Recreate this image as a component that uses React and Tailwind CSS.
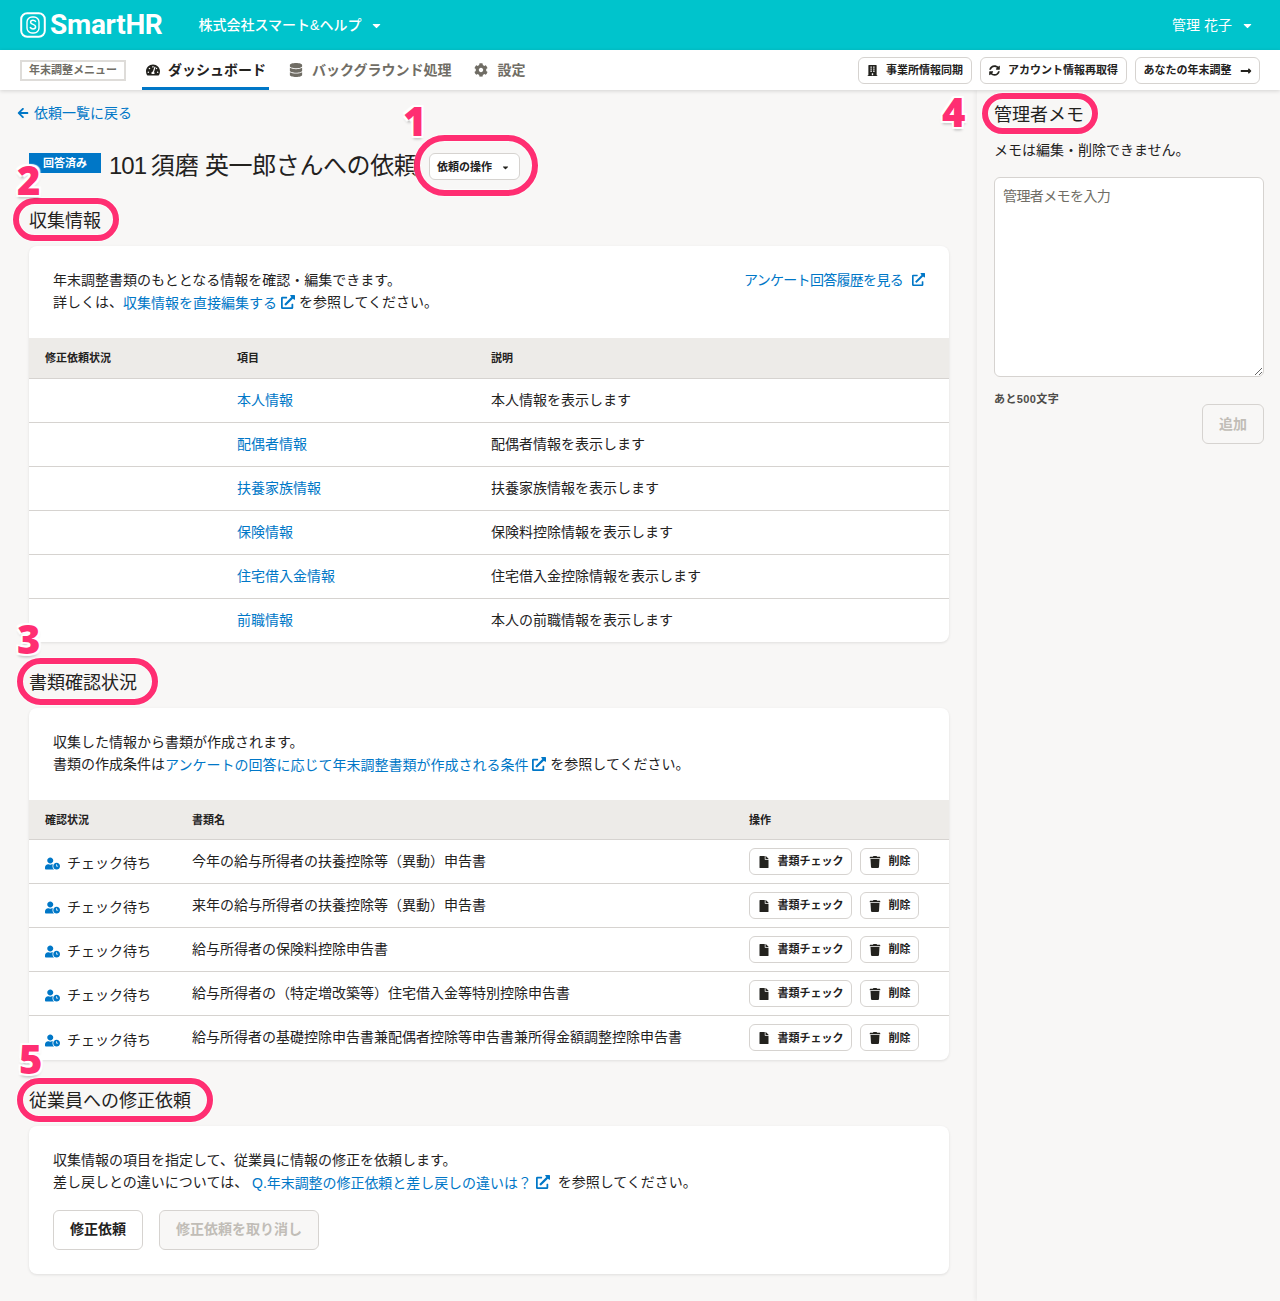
import {
  FaArrowLeft,
  FaBuilding,
  FaCaretDown,
  FaCog,
  FaDatabase,
  FaExternalLinkAlt,
  FaFile,
  FaLongArrowAltRight,
  FaSyncAlt,
  FaTachometerAlt,
  FaTrash,
  FaUserClock,
} from 'react-icons/fa';

const infoRows = [
  ['本人情報', '本人情報を表示します'],
  ['配偶者情報', '配偶者情報を表示します'],
  ['扶養家族情報', '扶養家族情報を表示します'],
  ['保険情報', '保険料控除情報を表示します'],
  ['住宅借入金情報', '住宅借入金控除情報を表示します'],
  ['前職情報', '本人の前職情報を表示します'],
];

const docRows = [
  '今年の給与所得者の扶養控除等（異動）申告書',
  '来年の給与所得者の扶養控除等（異動）申告書',
  '給与所得者の保険料控除申告書',
  '給与所得者の（特定増改築等）住宅借入金等特別控除申告書',
  '給与所得者の基礎控除申告書兼配偶者控除等申告書兼所得金額調整控除申告書',
];

const rings = [
  { key: 1, className: 'left-[414px] top-[135px] w-[124px] h-[61px]' },
  { key: 2, className: 'left-[13px] top-[198px] w-[106px] h-[43px]' },
  { key: 3, className: 'left-[17px] top-[658px] w-[141px] h-[47px]' },
  { key: 4, className: 'left-[982px] top-[93px] w-[116px] h-[41px]' },
  { key: 5, className: 'left-[17px] top-[1078px] w-[196px] h-[44px]' },
];

const numbers = [
  { n: '1', className: 'left-[403px] top-[98px]' },
  { n: '2', className: 'left-[17px] top-[157px]' },
  { n: '3', className: 'left-[17px] top-[616px]' },
  { n: '4', className: 'left-[942px] top-[89px]' },
  { n: '5', className: 'left-[19px] top-[1036px]' },
];

const ToolButton = ({ children, className = '' }) => (
  <button className={`flex h-[27px] items-center justify-center rounded-[6px] border border-[#d6d3d0] bg-white text-[11px] font-bold text-[#23221e] ${className}`}>
    {children}
  </button>
);

const ExternalLink = ({ children }) => (
  <a className="text-[#0077c7] align-[-1px]">
    {children}
    <FaExternalLinkAlt className="ml-[4px] inline-block align-[-1px] text-[14px]" />
  </a>
);

const Card = ({ children }) => (
  <section className="overflow-hidden rounded-[8px] bg-white shadow-[0_1px_3px_rgba(0,0,0,0.1)]">{children}</section>
);

const SectionTitle = ({ children }) => (
  <h2 className="h-[26px] text-[18px] leading-[28px] text-[#23221e]">{children}</h2>
);

const App = () => {
  return (
    <div
      className="relative h-[1301px] w-[1280px] overflow-hidden bg-[#f8f7f6] text-[14px] text-[#23221e]"
      style={{ fontFamily: '"Liberation Sans", "Noto Sans CJK JP", sans-serif' }}
    >
      <header className="flex h-[50px] items-center justify-between bg-[#00c4cc] pl-[20px] pr-[26px] text-white">
        <div className="flex items-center">
          <svg width="26" height="26" viewBox="0 0 26 26" fill="none">
            <rect x="1.2" y="1.2" width="23.6" height="23.6" rx="6" stroke="white" strokeWidth="2" />
            <rect x="7" y="5" width="12" height="16" rx="5" stroke="white" strokeWidth="1.4" />
            <path d="M15.5 9.4c-.6-.9-1.5-1.2-2.5-1.2-1.4 0-2.4.8-2.4 2 0 2.8 5 1.6 5 4.6 0 1.3-1.1 2.1-2.6 2.1-1.1 0-2.1-.5-2.7-1.4" stroke="white" strokeWidth="1.5" strokeLinecap="round" />
          </svg>
          <span className="ml-[4px] text-[28px] font-bold leading-none tracking-[-0.3px]" style={{ fontFamily: 'Roboto, sans-serif' }}>SmartHR</span>
          <span className="ml-[36px] font-medium">株式会社スマート&amp;ヘルプ</span>
          <FaCaretDown className="ml-[9px] text-[13px]" />
        </div>
        <div className="flex items-center">
          <span>管理 花子</span>
          <FaCaretDown className="ml-[9px] text-[13px]" />
        </div>
      </header>

      <nav className="relative z-10 flex h-[40px] items-center justify-between bg-white pl-[20px] pr-[20px] shadow-[0_1px_4px_rgba(0,0,0,0.15)]">
        <div className="flex h-full items-center">
          <span className="flex h-[21px] w-[106px] items-center justify-center border-2 border-[#dedcd9] pt-[1px] text-[11px] font-bold text-[#706d65]">年末調整メニュー</span>
          <a className="ml-[16px] flex h-full items-center border-b-[3px] border-[#0077c7] pl-[4px] pr-[3px] pt-[3px] font-bold">
            <FaTachometerAlt className="text-[14px]" />
            <span className="ml-[8px]">ダッシュボード</span>
          </a>
          <a className="ml-[20px] flex items-center font-bold text-[#706d65]">
            <FaDatabase className="text-[14px]" />
            <span className="ml-[9px]">バックグラウンド処理</span>
          </a>
          <a className="ml-[23px] flex items-center font-bold text-[#706d65]">
            <FaCog className="text-[14px]" />
            <span className="ml-[9px]">設定</span>
          </a>
        </div>
        <div className="flex items-center gap-[8px]">
          <ToolButton className="w-[114px] pt-[1px]">
            <FaBuilding className="mr-[8px] text-[11px]" />事業所情報同期
          </ToolButton>
          <ToolButton className="w-[147px] pt-[1px]">
            <FaSyncAlt className="mr-[8px] text-[11px]" />アカウント情報再取得
          </ToolButton>
          <ToolButton className="w-[125px] pt-[1px]">
            あなたの年末調整<FaLongArrowAltRight className="ml-[8px] text-[12px]" />
          </ToolButton>
        </div>
      </nav>

      <div className="flex h-[1211px]">
        <main className="w-[977px] pl-[29px] pr-[28px]">
          <a className="ml-[-12px] mt-[13px] flex h-[20px] items-center text-[#0077c7]">
            <FaArrowLeft className="mr-[5px] text-[12px]" />依頼一覧に戻る
          </a>
          <div className="mt-[30px] flex h-[27px] items-center">
            <span className="h-[20px] w-[72px] self-start bg-[#0077c7] pl-[14px] text-[11px] font-bold leading-[20px] text-white">回答済み</span>
            <h1 className="ml-[8px] w-[312px] whitespace-nowrap pb-[2px] text-[24px] leading-[25px]">
              <span className="tracking-[-1px]">101 </span>
              <span className="ml-[-1px]">須磨</span>
              <span className="tracking-[-0.4px]"> 英一郎さんへの依頼</span>
            </h1>
            <ToolButton className="ml-[8px] w-[91px] pr-[2px] pt-[2px]">
              依頼の操作<FaCaretDown className="ml-[9px] text-[9px]" />
            </ToolButton>
          </div>

          <div className="mt-[27px]">
            <SectionTitle>収集情報</SectionTitle>
          </div>
          <div className="mt-[13px]">
            <Card>
              <div className="flex h-[92px] justify-between px-[24px] pt-[23px] leading-[22px]">
                <p>
                  年末調整書類のもととなる情報を確認・編集できます。
                  <br />
                  詳しくは、<ExternalLink>収集情報を直接編集する</ExternalLink> を参照してください。
                </p>
                <div className="text-[#0077c7]">
                  <span className="tracking-[-0.7px]">アンケート回答履歴を見る</span>
                  <FaExternalLinkAlt className="ml-[9px] inline-block align-[-1px] text-[13px]" />
                </div>
              </div>
              <table className="w-full table-fixed border-collapse">
                <colgroup>
                  <col className="w-[192px]" />
                  <col className="w-[254px]" />
                  <col />
                </colgroup>
                <thead>
                  <tr className="h-[40px] bg-[#edebe8] text-left text-[11px]">
                    <th className="pl-[16px] font-bold">修正依頼状況</th>
                    <th className="pl-[16px] font-bold">項目</th>
                    <th className="pl-[16px] font-bold">説明</th>
                  </tr>
                </thead>
                <tbody>
                  {infoRows.map(([name, desc]) => (
                    <tr key={name} className="h-[44px] border-t border-[#d6d3d0]">
                      <td />
                      <td className="pl-[16px] pt-[1px] text-[#0077c7]">{name}</td>
                      <td className="pl-[16px] pt-[1px]">{desc}</td>
                    </tr>
                  ))}
                </tbody>
              </table>
            </Card>
          </div>

          <div className="mt-[27px]">
            <SectionTitle>書類確認状況</SectionTitle>
          </div>
          <div className="mt-[13px]">
            <Card>
              <div className="h-[92px] px-[24px] pt-[23px] leading-[22px]">
                <p>
                  収集した情報から書類が作成されます。
                  <br />
                  書類の作成条件は<ExternalLink>アンケートの回答に応じて年末調整書類が作成される条件</ExternalLink> を参照してください。
                </p>
              </div>
              <table className="w-full table-fixed border-collapse">
                <colgroup>
                  <col className="w-[147px]" />
                  <col className="w-[557px]" />
                  <col />
                </colgroup>
                <thead>
                  <tr className="h-[39px] bg-[#edebe8] text-left text-[11px]">
                    <th className="pl-[16px] pt-[1px] font-bold">確認状況</th>
                    <th className="pl-[16px] pt-[1px] font-bold">書類名</th>
                    <th className="pl-[16px] pt-[1px] font-bold">操作</th>
                  </tr>
                </thead>
                <tbody>
                  {docRows.map((doc, index) => (
                    <tr key={doc} className={`border-t border-[#d6d3d0] ${index === 4 ? 'h-[45px]' : 'h-[44px]'}`}>
                      <td className="pl-[16px]">
                        <span className="flex items-center pt-[5px]">
                          <FaUserClock className="text-[15px] text-[#0077c7]" />
                          <span className="ml-[7px]">チェック待ち</span>
                        </span>
                      </td>
                      <td className="pl-[16px]">{doc}</td>
                      <td className="pl-[16px]">
                        <div className="flex gap-[8px]">
                          <ToolButton className="w-[103px] pt-[1px]">
                            <FaFile className="mr-[8px] text-[12px]" />書類チェック
                          </ToolButton>
                          <ToolButton className="w-[59px] pt-[1px]">
                            <FaTrash className="mr-[8px] text-[12px]" />削除
                          </ToolButton>
                        </div>
                      </td>
                    </tr>
                  ))}
                </tbody>
              </table>
            </Card>
          </div>

          <div className="mt-[27px]">
            <SectionTitle>従業員への修正依頼</SectionTitle>
          </div>
          <div className="mt-[13px]">
            <Card>
              <div className="h-[148px] px-[24px] pt-[23px] leading-[22px]">
                <p>
                  収集情報の項目を指定して、従業員に情報の修正を依頼します。
                  <br />
                  差し戻しとの違いについては、 <ExternalLink><span className="tracking-[-0.05px]">Q.年末調整の修正依頼と差し戻しの違いは？</span></ExternalLink> <span className="ml-[4px]">を参照してください。</span>
                </p>
                <div className="mt-[16px] flex gap-[16px]">
                  <button className="h-[40px] w-[90px] rounded-[6px] border border-[#d6d3d0] bg-white pb-[2px] font-bold">修正依頼</button>
                  <button className="h-[40px] w-[160px] rounded-[6px] border border-[#d6d3d0] bg-[#f8f7f6] pb-[2px] font-bold text-[#c1bdb7]">修正依頼を取り消し</button>
                </div>
              </div>
            </Card>
          </div>
        </main>

        <aside className="w-[303px] pl-[17px] pr-[16px] shadow-[-2px_0_4px_rgba(0,0,0,0.05)]">
          <h2 className="mt-[12px] text-[18px] leading-[26px]">管理者メモ</h2>
          <p className="mt-[12px] leading-[20px]">メモは編集・削除できません。</p>
          <textarea
            className="mt-[17px] block h-[200px] w-[270px] rounded-[6px] border border-[#d6d3d0] bg-white px-[8px] py-[8px] text-[14px] leading-[20px] tracking-[-0.6px] outline-none placeholder:text-[#706d65]"
            placeholder="管理者メモを入力"
          />
          <p className="mt-[14px] text-[11px] font-bold leading-[16px] tracking-[0.4px] text-[#4e4c49]">あと500文字</p>
          <div className="mt-[-3px] flex w-[270px] justify-end">
            <button className="h-[40px] w-[62px] rounded-[6px] border border-[#d6d3d0] bg-[#f8f7f6] font-bold text-[#c1bdb7]">追加</button>
          </div>
        </aside>
      </div>

      {/* 説明用の注釈 */}
      {rings.map((ring) => (
        <div
          key={ring.key}
          className={`absolute z-20 rounded-full border-[6px] border-[#ff2e72] shadow-[0_0_0_1px_rgba(255,255,255,0.6),inset_0_0_0_1px_rgba(255,255,255,0.6)] ${ring.className}`}
        />
      ))}
      {numbers.map((item) => (
        <span
          key={item.n}
          className={`absolute z-20 text-[40px] font-extrabold leading-[46px] text-[#ff2e72] [text-shadow:0_0_2px_#fff,2px_2px_1px_#fff,-2px_-2px_1px_#fff,2px_-2px_1px_#fff,-2px_2px_1px_#fff,0_3px_3px_rgba(0,0,0,0.3)] ${item.className}`}
          style={{ fontFamily: '"Open Sans", sans-serif' }}
        >
          {item.n}
        </span>
      ))}
    </div>
  );
};

export default App;
